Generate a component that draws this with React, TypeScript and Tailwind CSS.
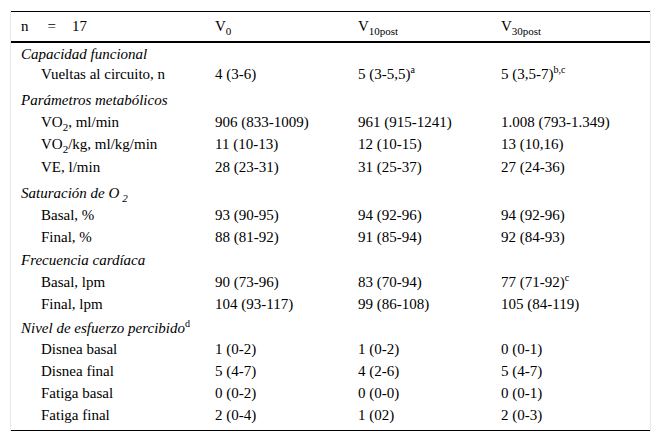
import type React from "react"

type Cell = React.ReactNode

interface Row {
  label: Cell
  section?: boolean
  h: number
  values?: Cell[]
}

const Sub = ({ children, className = "" }: { children: React.ReactNode; className?: string }) => (
  <span className={"relative top-[4px] text-[11px] leading-none " + className}>{children}</span>
)

const Sup = ({ children }: { children: React.ReactNode }) => (
  <span className="relative top-[-6px] text-[10px] leading-none not-italic">{children}</span>
)

const rows: Row[] = [
  { label: "Capacidad funcional", section: true, h: 20 },
  {
    label: "Vueltas al circuito, n",
    h: 26,
    values: [
      "4 (3-6)",
      <>5 (3-5,5)<Sup>a</Sup></>,
      <>5 (3,5-7)<Sup>b,c</Sup></>,
    ],
  },
  { label: "Parámetros metabólicos", section: true, h: 22 },
  {
    label: <>VO<Sub>2</Sub>, ml/min</>,
    h: 22,
    values: ["906 (833-1009)", "961 (915-1241)", "1.008 (793-1.349)"],
  },
  {
    label: <>VO<Sub>2</Sub>/kg, ml/kg/min</>,
    h: 23,
    values: ["11 (10-13)", "12 (10-15)", "13 (10,16)"],
  },
  { label: "VE, l/min", h: 26, values: ["28 (23-31)", "31 (25-37)", "27 (24-36)"] },
  {
    label: <>Saturación de O<Sub className="ml-[3px]">2</Sub></>,
    section: true,
    h: 22,
  },
  { label: "Basal, %", h: 22, values: ["93 (90-95)", "94 (92-96)", "94 (92-96)"] },
  { label: "Final, %", h: 23, values: ["88 (81-92)", "91 (85-94)", "92 (84-93)"] },
  { label: "Frecuencia cardíaca", section: true, h: 22 },
  {
    label: "Basal, lpm",
    h: 22,
    values: ["90 (73-96)", "83 (70-94)", <>77 (71-92)<Sup>c</Sup></>],
  },
  { label: "Final, lpm", h: 24, values: ["104 (93-117)", "99 (86-108)", "105 (84-119)"] },
  {
    label: <>Nivel de esfuerzo percibido<Sup>d</Sup></>,
    section: true,
    h: 21,
  },
  { label: "Disnea basal", h: 22, values: ["1 (0-2)", "1 (0-2)", "0 (0-1)"] },
  { label: "Disnea final", h: 22, values: ["5 (4-7)", "4 (2-6)", "5 (4-7)"] },
  { label: "Fatiga basal", h: 22, values: ["0 (0-2)", "0 (0-0)", "0 (0-1)"] },
  { label: "Fatiga final", h: 26, values: ["2 (0-4)", "1 (02)", "2 (0-3)"] },
]

const heights: Record<number, string> = {
  20: "h-[20px]",
  21: "h-[21px]",
  22: "h-[22px]",
  23: "h-[23px]",
  24: "h-[24px]",
  25: "h-[25px]",
  26: "h-[26px]",
  28: "h-[28px]",
}

export default function App() {
  return (
    <div className="font-[Liberation_Serif,serif] min-h-[443px] w-[661px] bg-white text-[15px] leading-[22px] text-black">
      <div className="ml-[10px] mt-[10px] w-[641px] border-x border-[#e8e8e8] pt-[1px]">
        <div className="border-t border-b border-black">
          <div className="grid h-[31px] grid-cols-[204px_143px_143px_1fr] border-b-2 border-black pt-[3px]">
            <div className="pl-[10px]">
              n<span className="ml-[19px]">=</span>
              <span className="ml-[16px]">17</span>
            </div>
            <div>
              V<Sub>0</Sub>
            </div>
            <div>
              V<Sub>10post</Sub>
            </div>
            <div>
              V<Sub>30post</Sub>
            </div>
          </div>
          {rows.map((row, i) => (
            <div key={i} className={"grid grid-cols-[204px_143px_143px_1fr] " + heights[row.h]}>
              {row.section ? (
                <div className="col-span-4 whitespace-nowrap pl-[10px] italic">{row.label}</div>
              ) : (
                <>
                  <div className="whitespace-nowrap pl-[30px]">{row.label}</div>
                  {row.values?.map((v, j) => (
                    <div key={j} className="whitespace-nowrap">
                      {v}
                    </div>
                  ))}
                </>
              )}
            </div>
          ))}
        </div>
      </div>
    </div>
  )
}
